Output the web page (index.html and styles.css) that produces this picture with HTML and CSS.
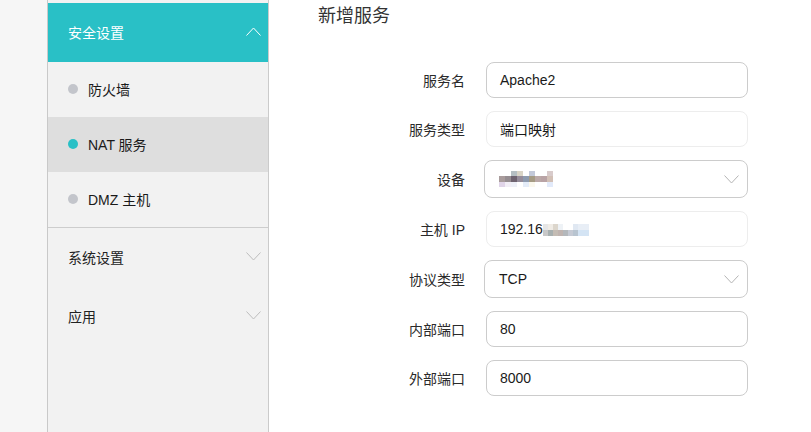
FILE: index.html
```html
<!DOCTYPE html>
<html lang="zh-CN">

<head>
    <meta charset="utf-8">
    <meta name="viewport" content="width=device-width, initial-scale=1.0">
    <title>NAT 服务</title>
    <link rel="stylesheet" href="styles.css">
</head>

<body>
    <div class="rand"></div>

    <nav class="menu">
        <div class="menu_head aaben">
            <span>安全设置</span>
            <svg class="pil" width="15" height="9" viewBox="0 0 15 9"><path d="M0.5 8.5 L7.5 1 L14.5 8.5" fill="none" stroke="#fff" stroke-width="1"/></svg>
        </div>
        <ul class="undermenu">
            <li><i class="prik"></i>防火墙</li>
            <li class="valgt"><i class="prik"></i>NAT 服务</li>
            <li><i class="prik"></i>DMZ 主机</li>
        </ul>
        <div class="menu_head">
            <span>系统设置</span>
            <svg class="pil" width="15" height="9" viewBox="0 0 15 9"><path d="M0.5 0.5 L7.5 8 L14.5 0.5" fill="none" stroke="#bdbdbd" stroke-width="1"/></svg>
        </div>
        <div class="menu_head">
            <span>应用</span>
            <svg class="pil" width="15" height="9" viewBox="0 0 15 9"><path d="M0.5 0.5 L7.5 8 L14.5 0.5" fill="none" stroke="#bdbdbd" stroke-width="1"/></svg>
        </div>
    </nav>

    <main class="indhold">
        <h1>新增服务</h1>

        <form class="formular">
            <label>服务名</label>
            <div class="felt">Apache2</div>

            <label>服务类型</label>
            <div class="felt laast">端口映射</div>

            <label>设备</label>
            <div class="felt vaelg">
                <span class="sloret enhed"></span>
                <svg width="15" height="9" viewBox="0 0 15 9"><path d="M0.5 0.5 L7.5 8 L14.5 0.5" fill="none" stroke="#b5b5b5" stroke-width="1"/></svg>
            </div>

            <label>主机 IP</label>
            <div class="felt laast">192.16<span class="sloret ip"></span></div>

            <label>协议类型</label>
            <div class="felt vaelg">
                <span>TCP</span>
                <svg width="15" height="9" viewBox="0 0 15 9"><path d="M0.5 0.5 L7.5 8 L14.5 0.5" fill="none" stroke="#b5b5b5" stroke-width="1"/></svg>
            </div>

            <label>内部端口</label>
            <div class="felt">80</div>

            <label>外部端口</label>
            <div class="felt">8000</div>
        </form>
    </main>
</body></html>
```
FILE: styles.css
```css
body {
    margin: 0;
    display: flex;
    height: 432px;
    overflow: hidden;
    font-family: "Liberation Sans", "Noto Sans CJK SC", sans-serif;
    font-size: 14px;
    color: #333;
    background-color: white;
}

.rand {
    width: 47px;
    background-color: #f6f6f6;
    border-right: 1px solid #c9c9c9;
}

.menu {
    width: 220px;
    padding-top: 3px;
    background-color: #f2f2f2;
    border-right: 1px solid #cbcbcb;
}

.menu_head {
    box-sizing: border-box;
    height: 59px;
    padding: 0 7px 2px 20px;
    display: flex;
    align-items: center;
    justify-content: space-between;
    color: #222;
}

.menu_head.aaben {
    background-color: #29c0c6;
    color: white;
}

.undermenu {
    list-style: none;
    margin: 0;
    padding: 0;
    border-bottom: 1px solid #cdcdcd;
}

.undermenu li {
    box-sizing: border-box;
    height: 55px;
    display: flex;
    align-items: center;
    padding: 0 0 2px 20px;
    color: #1a1a1a;
}

.undermenu li.valgt {
    background-color: #dedede;
}

.prik {
    width: 10px;
    height: 10px;
    border-radius: 50%;
    background-color: #c3c5cb;
    margin-right: 10px;
}

.valgt .prik {
    background-color: #29c0c6;
}

.indhold {
    flex: 1;
    padding-left: 49px;
}

h1 {
    font-size: 18px;
    font-weight: normal;
    line-height: 24px;
    margin: 4px 0 0 0;
    color: #333;
}

.formular {
    display: grid;
    grid-template-columns: 147px 262px;
    column-gap: 21px;
    row-gap: 13px;
    align-items: center;
    margin-top: 34px;
}

.formular label {
    text-align: right;
    color: #2a2a2a;
    padding-bottom: 1px;
}

.felt {
    box-sizing: border-box;
    height: 36px;
    padding: 0 13px 1px 13px;
    border: 1px solid #cccccc;
    border-radius: 8px;
    display: flex;
    align-items: center;
    color: #1a1a1a;
}

.felt.laast {
    border-color: #ededed;
}

.felt.vaelg {
    height: 38px;
    margin-left: -2px;
    padding: 0 8px 0 14px;
    justify-content: space-between;
}

.sloret {
    display: inline-block;
}

.enhed {
    width: 54px;
    height: 16px;
    background:
        linear-gradient(90deg, transparent 0 12px, #b5bfc3 12px 18px, #d9d4c6 18px 24px, transparent 24px 30px, #c3c9d9 30px 36px, transparent 36px 48px, #d8cbcb 48px 54px) 0 0 / 100% 5px no-repeat,
        linear-gradient(90deg, #a99c9c 0 6px, #968e92 6px 12px, #6f6370 12px 18px, #958c9a 18px 24px, #8d9aae 24px 30px, #a59b84 30px 36px, #bba9a8 36px 42px, #b9a3a5 42px 48px, #d2c0b6 48px 54px) 0 5px / 100% 6px no-repeat,
        linear-gradient(90deg, #e0d4e8 0 6px, #f2eef6 6px 12px, #eef0f8 12px 18px, transparent 18px 24px, #e4ecf8 24px 30px, #fbf8ee 30px 36px, transparent 36px 48px, #e2eafa 48px 54px) 0 11px / 100% 5px no-repeat;
}

.ip {
    width: 46px;
    height: 12px;
    margin-top: 2px;
    background:
        linear-gradient(90deg, #e6e6e6 0 5px, #f0ece6 5px 10px, #dcd6cc 10px 15px, #eef2f6 15px 20px, transparent 20px 30px, #e0e8f2 30px 35px, #e8eef6 35px 40px) 0 0 / 100% 6px no-repeat,
        linear-gradient(90deg, #c8c8c8 0 5px, #a8b0b0 5px 10px, #c4bcb4 10px 15px, #c0b4b0 15px 20px, #b4b8bc 20px 25px, #c6cad4 25px 30px, #b8c4d0 30px 35px, #d4e4f4 35px 46px) 0 6px / 100% 6px no-repeat;
}
```
